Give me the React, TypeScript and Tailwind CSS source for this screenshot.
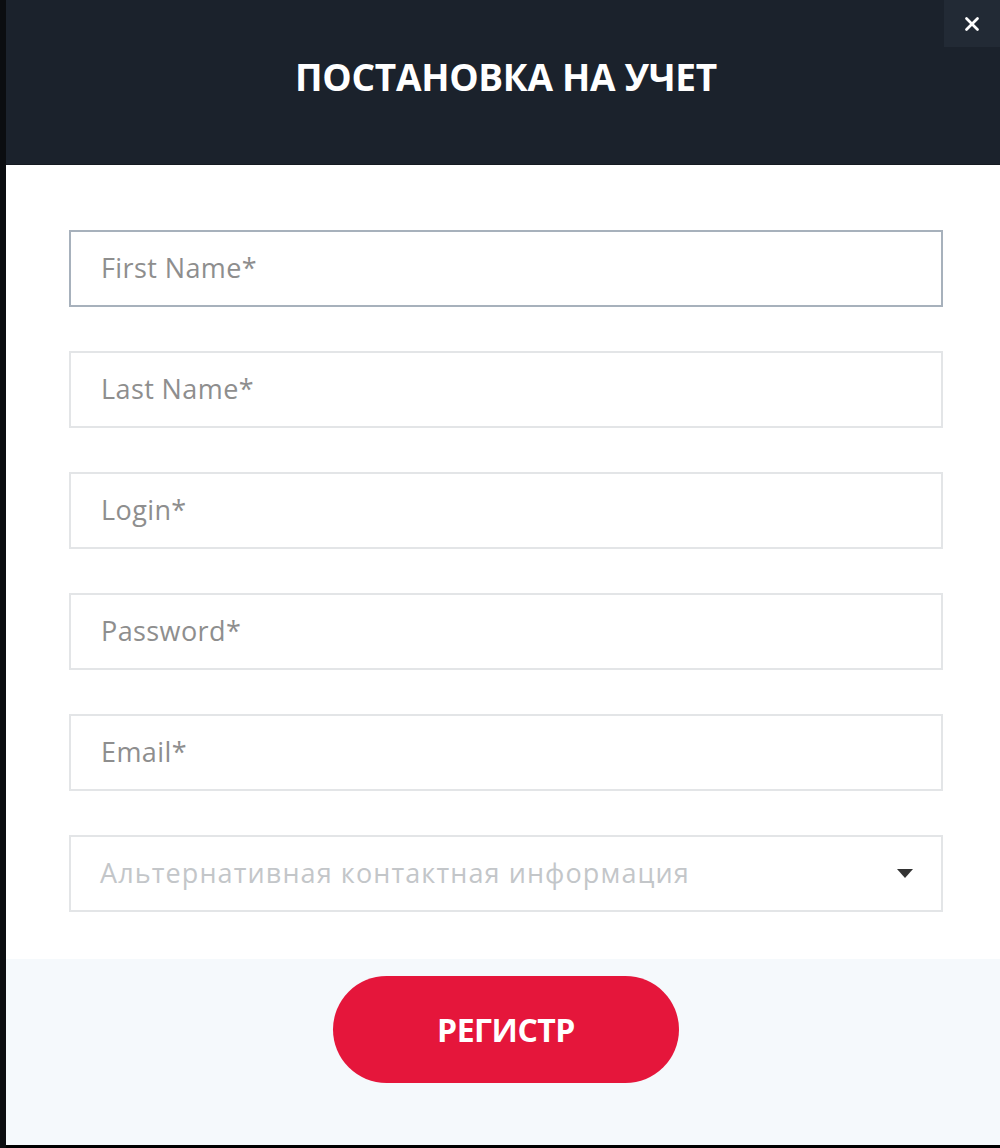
import { X } from 'lucide-react';

const fields = ['First Name*', 'Last Name*', 'Login*', 'Password*', 'Email*'];

const App = () => {
  return (
    <div className="w-[1000px] h-[1148px] flex bg-black" style={{ fontFamily: '"Open Sans", "Noto Sans", sans-serif' }}>
      {/* left dark edge */}
      <div className="w-[6px] shrink-0 bg-[#0b0d10]" />

      <div className="flex-1 flex flex-col mb-[3px] bg-white">
        {/* Header */}
        <div className="relative h-[165px] shrink-0 bg-[#1b222c] border-b border-[#151a21] flex items-center justify-center">
          <h1 className="text-[37px] font-bold text-white tracking-[-0.3px] pl-[6px] pb-[10px]">ПОСТАНОВКА НА УЧЕТ</h1>
          <button className="absolute top-0 right-0 w-[56px] h-[47px] bg-[#222a35] flex items-center justify-center">
            <X size={22} strokeWidth={3} className="text-white" />
          </button>
        </div>

        {/* Form */}
        <div className="flex-1 flex flex-col gap-[44px] pl-[63px] pr-[57px] pt-[65px]">
          {fields.map((f, i) => (
            <div
              key={f}
              className={
                i === 0
                  ? 'h-[77px] border-2 border-[#a7b1bc] flex items-center px-[30px]'
                  : 'h-[77px] border-2 border-[#e3e5e7] flex items-center px-[30px]'
              }
            >
              <span className="text-[27px] tracking-[0.4px] text-[#8e8e8e]">{f}</span>
            </div>
          ))}
          <div className="h-[77px] border-2 border-[#e3e5e7] flex items-center justify-between pl-[29px] pr-[28px]">
            <span className="text-[27px] tracking-[1.1px] text-[#c3c6c9]">Альтернативная контактная информация</span>
            <svg width="16" height="9" viewBox="0 0 16 9">
              <path d="M0 0 H16 L8 9 Z" fill="#333" />
            </svg>
          </div>
        </div>

        {/* Footer */}
        <div className="h-[186px] shrink-0 bg-[#f5f9fc] flex justify-center pt-[17px] pl-[6px]">
          <button className="w-[346px] h-[107px] rounded-full bg-[#e5163b] text-white text-[32px] font-bold tracking-[-0.5px]">
            РЕГИСТР
          </button>
        </div>
      </div>
    </div>
  );
};

export default App;
